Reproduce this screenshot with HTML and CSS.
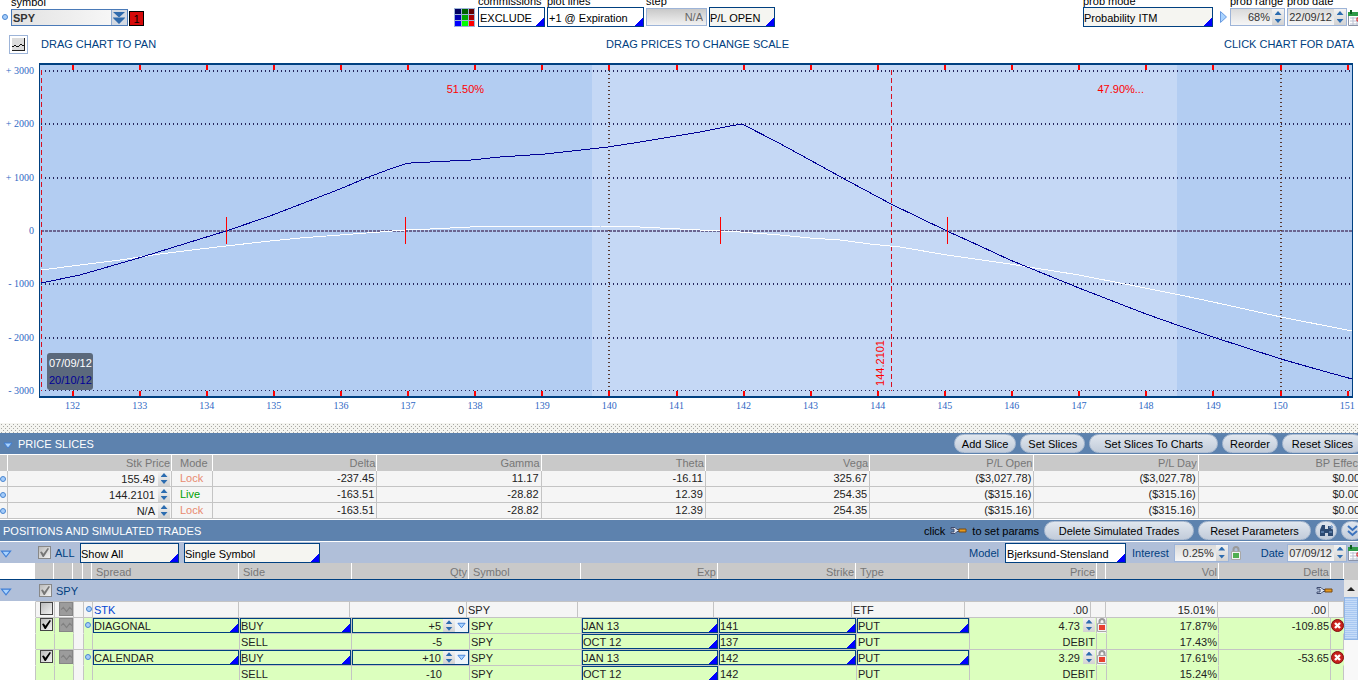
FILE: index.html
```html
<!DOCTYPE html>
<html lang="en">
<head>
    <meta charset="UTF-8">
    <title>Risk Profile - SPY</title>
    <link rel="stylesheet" href="styles.css">
</head>
<body>
    <!-- shared icons -->
    <svg class="defs" aria-hidden="true">
        <symbol id="i-tri" viewBox="0 0 10 7"><path d="M1 1h8L5 6z" fill="#a9d3ff" stroke="#3f7fd6"/></symbol>
        <symbol id="i-cal" viewBox="0 0 16 16">
            <path d="M0.5 2.5h15v13h-15z" fill="#fff" stroke="#8a93a8"/>
            <path d="M0 2h16v4H0z" fill="#2f9a48"/>
            <path d="M3 0v4M12 0v4" stroke="#0c5c20" stroke-width="2"/>
            <path d="M2 8h12M2 11h12M2 14h12M5 7v8M9 7v8M13 7v8" stroke="#b9bfd0"/>
            <path d="M9 8h3v3H9z" fill="none" stroke="#e02020"/>
        </symbol>
        <symbol id="i-lock" viewBox="0 0 10 14">
            <path d="M2.5 6V3.500a2.500 2.500 0 0 1 5 0V6" fill="none" stroke="#9a9a9a" stroke-width="2"/>
            <path d="M0.500 5.500h9v8h-9z" fill="#f2f2f2" stroke="#a8a8a8"/>
            <path d="M2 7h6v5H2z" fill="currentColor"/>
        </symbol>
        <symbol id="i-wrench" viewBox="0 0 17 9">
            <path d="M1 1.500h4l2 2h2v2H7l-2 2H1V6h3V3H1z" fill="#dfe6f2" stroke="#3f4c70"/>
            <path d="M9 3h7v3H9z" fill="#e89a1c" stroke="#7a4a10"/>
        </symbol>
        <symbol id="i-del" viewBox="0 0 13 13">
            <circle cx="6.500" cy="6.500" r="6" fill="#c8201c" stroke="#7c0d0d"/>
            <path d="M4 4l5 5M9 4l-5 5" stroke="#fff" stroke-width="2.400"/>
        </symbol>
        <symbol id="i-mini" viewBox="0 0 13 13">
            <path d="M0.500 0.500h12v12h-12z" fill="#9c9c9c" stroke="#868686"/>
            <path d="M2 7l2-2 3 4 3-4 2 2" fill="none" stroke="#818181"/>
        </symbol>
    </svg>

    <div class="toolbar">
        <div class="group symbol-group">
            <i class="dot"></i>
            <div class="field f-symbol">
                <label for="symbol">symbol</label>
                <div class="combo">
                    <input id="symbol" type="text" value="SPY">
                    <button type="button" aria-label="Recent symbols">
                        <svg width="14" height="14" viewBox="0 0 14 14"><path d="M1 1h12L7 6.500zM1 7h12l-6 6z" fill="#2f6aac"/><path d="M1 6.500h12" stroke="#7f9fc4"/></svg>
                    </button>
                </div>
            </div>
            <button type="button" class="link-no">1</button>
        </div>
        <div class="group">
            <button type="button" class="palette" aria-label="Colors">
                <svg width="21" height="19" viewBox="0 0 21 19" shape-rendering="crispEdges">
                    <path d="M0 0h21v19H0z" fill="#9db4d8"/>
                    <path d="M1 1h6v5H1z" fill="#000060"/><path d="M8 1h6v5H8z" fill="#006000"/><path d="M15 1h5v5h-5z" fill="#600000"/>
                    <path d="M1 7h6v5H1z" fill="#0000b0"/><path d="M8 7h6v5H8z" fill="#00a800"/><path d="M15 7h5v5h-5z" fill="#a80000"/>
                    <path d="M1 13h6v5H1z" fill="#0000ff"/><path d="M8 13h6v5H8z" fill="#00ff00"/><path d="M15 13h5v5h-5z" fill="#ff0000"/>
                </svg>
            </button>
            <div class="field f-comm">
                <label for="comm">commissions</label>
                <select id="comm" class="drop"><option>EXCLUDE</option></select>
            </div>
            <div class="field f-lines">
                <label for="lines">plot lines</label>
                <select id="lines" class="drop"><option>+1 @ Expiration</option></select>
            </div>
            <div class="field f-step">
                <label for="step">step</label>
                <input id="step" type="text" class="num-box" value="N/A">
            </div>
            <div class="field f-pl">
                <select class="drop pale" aria-label="Plot value"><option>P/L OPEN</option></select>
            </div>
        </div>
        <div class="group right">
            <div class="field f-mode">
                <label for="mode">prob mode</label>
                <select id="mode" class="drop pale"><option>Probability ITM</option></select>
            </div>
            <button type="button" class="play" aria-label="Expand"><svg width="7" height="12" viewBox="0 0 7 12"><path d="M0.500 0.500L6.500 6l-6 5.500z" fill="#a9d3ff" stroke="#6a9be0"/></svg></button>
            <div class="field f-range">
                <label for="range">prob range</label>
                <div class="spin-box"><input id="range" type="text" value="68%"><span class="spin"><button type="button" aria-label="Up"></button><button type="button" aria-label="Down"></button></span></div>
            </div>
            <div class="field f-date">
                <label for="pdate">prob date</label>
                <div class="spin-box"><input id="pdate" type="text" value="22/09/12"><span class="spin"><button type="button" aria-label="Up"></button><button type="button" aria-label="Down"></button></span></div>
            </div>
            <button type="button" class="cal" aria-label="Pick date"><svg width="16" height="16"><use href="#i-cal"/></svg></button>
        </div>
    </div>

    <div class="hints">
        <button type="button" class="chart-btn" aria-label="Chart">
            <svg width="13" height="13" viewBox="0 0 13 13" shape-rendering="crispEdges"><path d="M0 0h13v13H0z" fill="#222"/><path d="M0 0h12v12H0z" fill="#dcdcdc"/><path d="M0 8.500h2M2 7.500h2M4 8.500h3M7 7.500h1M8 6.500h2M10 7.500h2" fill="none" stroke="#111"/></svg>
        </button>
        <span class="hint">DRAG CHART TO PAN</span>
        <span class="hint">DRAG PRICES TO CHANGE SCALE</span>
        <span class="hint">CLICK CHART FOR DATA</span>
    </div>

    <div class="chart">
        <div class="y-axis"><span>+ 3000</span><span>+ 2000</span><span>+ 1000</span><span>0</span><span>- 1000</span><span>- 2000</span><span>- 3000</span></div>
        <div class="plot">
            <svg viewBox="40 65 1312 331" preserveAspectRatio="none" shape-rendering="crispEdges">
                <path d="M592 65h585v331H592z" fill="#c5d8f5"/>
                <!-- grid -->
                <path class="grid" d="M41 71H1352M41 124H1352M41 178H1352M41 284H1352M41 338H1352"/>
                <path class="grid thin" d="M41 390.500H1352"/>
                <path class="zero" d="M41 231H1352"/>
                <path class="expiry" d="M609 70V391M1281 70V391"/>
                <!-- price ticks -->
                <path class="tick" d="M73 65v5M140 65v5M207 65v5M274 65v5M341 65v5M408 65v5M475 65v5M542 65v5M609 65v5M677 65v5M744 65v5M811 65v5M878 65v5M945 65v5M1012 65v5M1079 65v5M1146 65v5M1213 65v5M1281 65v5M1348 65v5"/>
                <path class="tick" d="M73 391v5M140 391v5M207 391v5M274 391v5M341 391v5M408 391v5M475 391v5M542 391v5M609 391v5M677 391v5M744 391v5M811 391v5M878 391v5M945 391v5M1012 391v5M1079 391v5M1146 391v5M1213 391v5M1281 391v5M1348 391v5"/>
                <path class="slice" d="M41.500 70V391M891.500 70V391"/>
                <!-- today and expiration curves -->
                <polyline class="today" points="41,270 80,265 120,260 160,254 200,249 226,246 270,241 300,238 340,235 380,232 405,230 430,229 470,227 510,226 600,226 640,227 700,230 740,232 780,235 810,238 840,240 870,244 900,247 947,255 1010,264 1079,275 1130,285 1180,295 1213,302 1281,317 1352,331"/>
                <polyline class="exp" points="41,283 80,275 142,257 200,239 226,231 270,216 340,189 366,178 390,169 405,164 411,163 430,162 471,160 500,157 545,154 608,147 640,142 670,137 700,132 730,126 742,124 777,142 810,160 850,182 891,204 920,218 947,231 980,246 1010,260 1079,288 1146,314 1180,326 1213,337 1247,348 1281,359 1316,369 1352,379"/>
                <path class="even" d="M226.500 217v27M405.500 217v27M720.500 217v27M947.500 217v27"/>
            </svg>
            <span class="pct pct-left">51.50%</span>
            <span class="pct pct-right">47.90%...</span>
            <span class="price-now">144.2101</span>
            <div class="dates"><span>07/09/12</span><span class="exp-date">20/10/12</span></div>
        </div>
    </div>
    <div class="x-axis"><span>132</span><span>133</span><span>134</span><span>135</span><span>136</span><span>137</span><span>138</span><span>139</span><span>140</span><span>141</span><span>142</span><span>143</span><span>144</span><span>145</span><span>146</span><span>147</span><span>148</span><span>149</span><span>150</span><span>151</span></div>

    <svg class="splitter" aria-hidden="true" shape-rendering="crispEdges">
        <pattern id="grip" width="4" height="4" patternUnits="userSpaceOnUse"><path d="M1 1h1v1H1zM3 3h1v1H3z" fill="#a8a8a4"/></pattern>
        <rect width="100%" height="10" fill="url(#grip)"/>
    </svg>

    <div class="title-bar">
        <svg class="fold" width="10" height="7"><use href="#i-tri"/></svg>
        <h2>PRICE SLICES</h2>
        <div class="actions">
            <button type="button" class="pill">Add Slice</button>
            <button type="button" class="pill">Set Slices</button>
            <button type="button" class="pill wide">Set Slices To Charts</button>
            <button type="button" class="pill">Reorder</button>
            <button type="button" class="pill last">Reset Slices</button>
        </div>
    </div>
    <table class="slices">
        <colgroup><col class="c-dot"><col class="c-price"><col class="c-mode"><col><col><col><col><col><col><col></colgroup>
        <thead>
            <tr><th></th><th>Stk Price</th><th class="mode">Mode</th><th>Delta</th><th>Gamma</th><th>Theta</th><th>Vega</th><th>P/L Open</th><th>P/L Day</th><th>BP Effect</th></tr>
        </thead>
        <tbody>
            <tr><td><i class="dot"></i></td><td><div class="cell-spin"><span>155.49</span><span class="spin"><button type="button" aria-label="Up"></button><button type="button" aria-label="Down"></button></span></div></td><td class="mode lock">Lock</td><td>-237.45</td><td>11.17</td><td>-16.11</td><td>325.67</td><td>($3,027.78)</td><td>($3,027.78)</td><td>$0.00</td></tr>
            <tr><td><i class="dot"></i></td><td><div class="cell-spin"><span>144.2101</span><span class="spin"><button type="button" aria-label="Up"></button><button type="button" aria-label="Down"></button></span></div></td><td class="mode live">Live</td><td>-163.51</td><td>-28.82</td><td>12.39</td><td>254.35</td><td>($315.16)</td><td>($315.16)</td><td>$0.00</td></tr>
            <tr><td><i class="dot"></i></td><td><div class="cell-spin"><span>N/A</span><span class="spin"><button type="button" aria-label="Up"></button><button type="button" aria-label="Down"></button></span></div></td><td class="mode lock">Lock</td><td>-163.51</td><td>-28.82</td><td>12.39</td><td>254.35</td><td>($315.16)</td><td>($315.16)</td><td>$0.00</td></tr>
        </tbody>
    </table>

    <div class="title-bar positions-bar">
        <h2>POSITIONS AND SIMULATED TRADES</h2>
        <div class="actions">
            <span class="note">click <svg width="17" height="9"><use href="#i-wrench"/></svg> to set params</span>
            <button type="button" class="pill delete">Delete Simulated Trades</button>
            <button type="button" class="pill reset">Reset Parameters</button>
            <button type="button" class="pill round" aria-label="Find">
                <svg width="15" height="13" viewBox="0 0 15 13"><path d="M1 12V6l2-5h3v4h3V2h3l2 4v6H9V9H6v3z" fill="#2d4a72"/><path d="M2 8h3M10 8h3M10 3h4l-2-2M14 3l-2 2" fill="none" stroke="#7fa3d2"/></svg>
            </button>
            <button type="button" class="pill round" aria-label="More">
                <svg width="11" height="12" viewBox="0 0 11 12"><path d="M1 1l4.500 4L10 1M1 6l4.500 4L10 6" fill="none" stroke="#3c73bd" stroke-width="2"/></svg>
            </button>
        </div>
    </div>
    <div class="filters">
        <svg class="fold" width="12" height="8"><use href="#i-tri"/></svg>
        <label class="check-label"><input type="checkbox" class="check soft" checked>ALL</label>
        <select class="drop pale f-show" aria-label="Show"><option>Show All</option></select>
        <select class="drop pale f-single" aria-label="Grouping"><option>Single Symbol</option></select>
        <div class="params">
            <label for="model">Model</label>
            <select id="model" class="drop f-model"><option>Bjerksund-Stensland</option></select>
            <label for="interest">Interest</label>
            <div class="spin-box f-interest"><input id="interest" type="text" value="0.25%"><span class="spin"><button type="button" aria-label="Up"></button><button type="button" aria-label="Down"></button></span></div>
            <svg class="lock-green" width="10" height="14"><use href="#i-lock"/></svg>
            <label for="date">Date</label>
            <div class="spin-box f-day"><input id="date" type="text" value="07/09/12"><span class="spin"><button type="button" aria-label="Up"></button><button type="button" aria-label="Down"></button></span></div>
            <button type="button" class="cal" aria-label="Pick date"><svg width="16" height="16"><use href="#i-cal"/></svg></button>
        </div>
    </div>

    <div class="positions">
        <table class="pos">
            <thead>
                <tr><th class="blank"></th><th></th><th></th><th></th><th></th><th class="l">Spread</th><th class="l">Side</th><th>Qty</th><th class="l">Symbol</th><th>Exp</th><th>Strike</th><th class="l">Type</th><th>Price</th><th></th><th>Vol</th><th>Delta</th><th></th></tr>
            </thead>
            <tbody>
                <tr class="sym"><td colspan="17">
                    <div class="sym-row">
                        <svg class="fold" width="12" height="8"><use href="#i-tri"/></svg>
                        <label class="check-label"><input type="checkbox" class="check soft" checked>SPY</label>
                        <svg class="wrench" width="17" height="9"><use href="#i-wrench"/></svg>
                    </div>
                </td></tr>
                <tr class="stk"><td class="blank"></td><td><input type="checkbox" class="check" aria-label="Include STK"></td><td><svg width="14" height="14"><use href="#i-mini"/></svg></td><td></td><td><i class="dot"></i></td><td class="l"><a href="#">STK</a></td><td></td><td>0</td><td class="l">SPY</td><td></td><td></td><td class="l">ETF</td><td>.00</td><td></td><td>15.01%</td><td>.00</td><td></td></tr>
                <tr class="leg"><td class="blank"></td><td><input type="checkbox" class="check" aria-label="Include DIAGONAL" checked></td><td><svg width="14" height="14"><use href="#i-mini"/></svg></td><td class="gap"></td><td><i class="dot"></i></td><td><select class="drop" aria-label="Spread"><option>DIAGONAL</option></select></td><td><select class="drop" aria-label="Side"><option>BUY</option></select></td><td><div class="qty"><input type="text" value="+5" aria-label="Quantity"><span class="spin"><button type="button" aria-label="Up"></button><button type="button" aria-label="Down"></button></span><button type="button" class="more" aria-label="Quantities"><svg width="9" height="7"><use href="#i-tri"/></svg></button></div></td><td class="l">SPY</td><td><select class="drop" aria-label="Expiration"><option>JAN 13</option></select></td><td><select class="drop" aria-label="Strike"><option>141</option></select></td><td><select class="drop" aria-label="Type"><option>PUT</option></select></td><td><div class="cell-spin"><span>4.73</span><span class="spin"><button type="button" aria-label="Up"></button><button type="button" aria-label="Down"></button></span></div></td><td class="lock-cell"><svg width="10" height="14"><use href="#i-lock"/></svg></td><td>17.87%</td><td>-109.85</td><td class="del"><button type="button" aria-label="Remove"><svg width="13" height="13"><use href="#i-del"/></svg></button></td></tr>
                <tr class="leg sell"><td class="blank"></td><td></td><td></td><td class="gap"></td><td></td><td></td><td class="l">SELL</td><td class="qty-text">-5</td><td class="l">SPY</td><td><select class="drop" aria-label="Expiration"><option>OCT 12</option></select></td><td><select class="drop" aria-label="Strike"><option>137</option></select></td><td class="l">PUT</td><td>DEBIT</td><td></td><td>17.43%</td><td></td><td></td></tr>
                <tr class="leg"><td class="blank"></td><td><input type="checkbox" class="check" aria-label="Include CALENDAR" checked></td><td><svg width="14" height="14"><use href="#i-mini"/></svg></td><td class="gap"></td><td><i class="dot"></i></td><td><select class="drop" aria-label="Spread"><option>CALENDAR</option></select></td><td><select class="drop" aria-label="Side"><option>BUY</option></select></td><td><div class="qty"><input type="text" value="+10" aria-label="Quantity"><span class="spin"><button type="button" aria-label="Up"></button><button type="button" aria-label="Down"></button></span><button type="button" class="more" aria-label="Quantities"><svg width="9" height="7"><use href="#i-tri"/></svg></button></div></td><td class="l">SPY</td><td><select class="drop" aria-label="Expiration"><option>JAN 13</option></select></td><td><select class="drop" aria-label="Strike"><option>142</option></select></td><td><select class="drop" aria-label="Type"><option>PUT</option></select></td><td><div class="cell-spin"><span>3.29</span><span class="spin"><button type="button" aria-label="Up"></button><button type="button" aria-label="Down"></button></span></div></td><td class="lock-cell"><svg width="10" height="14"><use href="#i-lock"/></svg></td><td>17.61%</td><td>-53.65</td><td class="del"><button type="button" aria-label="Remove"><svg width="13" height="13"><use href="#i-del"/></svg></button></td></tr>
                <tr class="leg sell"><td class="blank"></td><td></td><td></td><td class="gap"></td><td></td><td></td><td class="l">SELL</td><td class="qty-text">-10</td><td class="l">SPY</td><td><select class="drop" aria-label="Expiration"><option>OCT 12</option></select></td><td class="l">142</td><td class="l">PUT</td><td>DEBIT</td><td></td><td>15.24%</td><td></td><td></td></tr>
            </tbody>
        </table>
        <div class="scroll">
            <button type="button" aria-label="Scroll up"><svg width="8" height="4" viewBox="0 0 8 4"><path d="M0 4l4-4 4 4z" fill="#222"/></svg></button>
            <div class="thumb"></div>
        </div>
    </div>
</body>
</html>
```

FILE: styles.css
```css
*{box-sizing: border-box;}
html,body{height: 100%;}
body{margin: 0;overflow: hidden;background-color: #fff;color: #222;font: 11px/14px "Liberation Sans", Arial, sans-serif;}
button,input,select{margin: 0;padding: 0;border: 0;border-radius: 0;background: none;color: inherit;font: inherit;}
svg{display: block;flex: none;}
.defs{width: 0;height: 0;position: absolute;}
h2{margin: 0;font-size: 11px;font-weight: normal;color: #fff;}

/* small parts */
.dot{display: block;flex: none;width: 6px;height: 6px;border: 1px solid #4a86d0;border-radius: 50%;background-color: #a6cdfb;}
.drop{display: block;width: 100%;height: 20px;padding: 2px 1px 0;border: 1px solid #004080;appearance: none;color: #000;background: linear-gradient(135deg, transparent 50%, #00f 50%) right bottom/8px 8px no-repeat #fff;}
.pale{padding-left: 0;background-color: #f5f5f1;}
.num-box{width: 100%;height: 18px;padding-right: 3px;border: 1px solid #9db4d8;text-align: right;color: #666;background: linear-gradient(#c9c9c9, #f2f2f2);}
.spin{display: flex;flex-direction: column;flex: none;width: 12px;height: 14px;background: linear-gradient(#f2f2f2, #d2d2d2);}
.spin button{flex: 1;display: flex;align-items: center;justify-content: center;}
.spin button:before{content: "";width: 7px;height: 4px;background-color: #2c6cb0;clip-path: polygon(50% 0, 100% 100%, 0 100%);}
.spin button:last-child:before{clip-path: polygon(0 0, 100% 0, 50% 100%);}
.spin-box{display: flex;align-items: center;width: 100%;height: 18px;border: 1px solid #9db4d8;background: linear-gradient(#dadada, #f6f6f6);}
.spin-box input{flex: 1;min-width: 0;padding-right: 2px;text-align: right;color: #333;}
.spin-box .spin{height: 16px;}
.cal{width: 10px;overflow: hidden;margin-left: 1px;}
.check{flex: none;appearance: none;display: block;width: 13px;height: 13px;border: 1px solid #444;background: linear-gradient(135deg, #bbb, #f2f2f2);}
.check:checked:after{content: "";display: block;width: 9px;height: 9px;margin: 1px;background-color: #000;clip-path: polygon(0 45%, 20% 40%, 38% 65%, 85% 0, 100% 8%, 42% 100%, 30% 100%);}
.soft{border-color: #888;}
.soft:checked:after{background-color: #777;}

/* toolbar */
.toolbar{display: flex;height: 30px;padding-left: 2px;}
.group{display: flex;align-items: flex-end;gap: 2px;padding-bottom: 3px;}
.symbol-group{width: 452px;padding-bottom: 4px;}
.symbol-group .dot{margin: 0 1px 6px 0;}
.symbol-group .link-no{margin-left: -1px;}
.right{margin-left: auto;}
.field{flex: none;}
.field label{display: block;height: 13px;color: #000;white-space: nowrap;}
.f-symbol label{height: 14px;}
.f-symbol{width: 117px;}
.f-comm{width: 67px;}
.f-lines{width: 97px;}
.f-step{width: 61px;padding-bottom: 1px;}
.f-pl{width: 66px;}
.f-mode{width: 130px;}
.f-range{width: 55px;padding-bottom: 1px;}
.f-date{width: 60px;padding-bottom: 1px;}
.f-step label,.f-range label,.f-date label{height: 14px;}
.combo{display: flex;height: 17px;border: 1px solid #4a7ab8;background: linear-gradient(90deg, #e2e2e2, #fafafa);}
.combo input{flex: 1;min-width: 0;padding-left: 1px;font-weight: bold;color: #333;}
.combo button{width: 16px;border-left: 1px solid #8fabd0;background-color: #d3d9e2;}
.link-no{width: 15px;height: 15px;border: 1px solid #000;background-color: #d60a0a;color: #000;}
.palette{margin-right: 1px;}
.play{margin: 0 1px 4px 5px;}
.group .cal{margin: 0 0 1px -1px;}

/* chart */
.hints{display: grid;grid-template-columns: 32px 1fr auto 1fr;align-items: center;height: 33px;padding: 0 4px 5px 9px;color: #004080;}
.hints .hint:last-child{text-align: right;}
.chart-btn{display: flex;align-items: center;justify-content: center;width: 19px;height: 19px;border: 1px solid #9db4d8;}
.chart{display: grid;grid-template-columns: 39px 1fr;padding-right: 5px;}
.y-axis{display: flex;flex-direction: column;justify-content: space-between;padding: 1px 5px 0 0;text-align: right;}
.y-axis,.x-axis{font: 10px/14px "Liberation Serif", "Times New Roman", serif;color: #2f68c4;}
.plot{position: relative;border: 1px solid #004080;border-width: 2px 1px;background-color: #b3cdf2;}
.plot svg{width: 100%;height: 331px;}
.plot path,.plot polyline{vector-effect: non-scaling-stroke;}
.grid{stroke: #26265c;stroke-width: 2;stroke-dasharray: 1 3;}
.thin{stroke-width: 1;}
.zero{stroke: #6b6590;stroke-width: 2;stroke-dasharray: 3 1;}
.expiry{stroke: #5a3a30;stroke-width: 2;stroke-dasharray: 1 3;}
.tick{stroke: #f00;stroke-width: 2;}
.slice{stroke: #d81020;stroke-dasharray: 5 3;}
.even{stroke: #f00;}
.today,.exp{fill: none;stroke: #fff;}
.exp{stroke: #000096;}
.pct,.price-now{position: absolute;color: #f00;}
.pct{top: 17px;}
.pct-left{left: 31%;}
.pct-right{left: 80.6%;}
.price-now{left: 63.5%;bottom: 10px;writing-mode: vertical-rl;transform: rotate(180deg);}
.dates{position: absolute;left: 7px;bottom: 6px;padding: 2px 1px 1px 2px;border-radius: 3px;background-color: #5b697c;color: #fff;line-height: 17px;}
.dates span{display: block;}
.dates .exp-date{color: #000096;}
.x-axis{display: flex;height: 25px;margin: 0 -23px 0 39px;padding-top: 1px;text-align: center;}
.x-axis span{flex: 1;}
.splitter{width: 100%;height: 10px;background-color: #f5f5f1;}

/* section bars */
.title-bar{display: flex;align-items: center;height: 22px;padding-left: 3px;border-bottom: 1px solid #fff;background-color: #5d82ae;}
.title-bar .fold{margin: 4px 5px 0 0;}
.actions{display: flex;align-items: center;gap: 4px;margin: 0 -5px 0 auto;}
.pill{height: 19px;padding: 0 7px;border: 1px solid #aebdd2;border-radius: 10px;color: #000;white-space: nowrap;background: linear-gradient(#e0e6ee, #c2ccda);}
.wide{padding: 0 14px;}
.last{padding: 0 9px;}
.delete{width: 150px;}
.reset{width: 113px;}
.round{display: flex;align-items: center;justify-content: center;width: 22px;padding: 0;}
.note{display: flex;align-items: center;gap: 5px;margin-right: 1px;color: #000;}

/* price slices */
table{border-collapse: separate;border-spacing: 0;}
th{font-weight: normal;color: #777;background-color: #c9c9c9;}
.slices{table-layout: fixed;width: calc(100% + 5px);border-bottom: 1px solid #fff;}
.slices th,.slices td{height: 16px;padding: 0 2px;border-right: 1px solid #fff;text-align: right;line-height: 15px;overflow: hidden;}
.slices th{padding: 1px 1px 0;}
.slices td{border-right-color: #c4c4c4;border-bottom: 1px solid #c4c4c4;background-color: #f5f5f5;}
.slices .c-dot{width: 8px;}
.slices .c-price{width: 164px;}
.slices .c-mode{width: 41px;}
.slices td:first-child{padding: 0;}
.slices td:nth-child(2){padding-right: 1px;}
.slices .mode{padding-left: 8px;text-align: left;}
.lock{color: #e88a70;}
.live{color: #00a000;}
.cell-spin{display: flex;justify-content: flex-end;gap: 3px;height: 14px;}

/* positions */
.filters{display: flex;align-items: center;height: 21px;background-color: #b0bfd9;color: #004080;}
.filters .fold,.sym-row .fold{margin: 3px 26px 0 0;}
.check-label{display: flex;align-items: center;gap: 4px;width: 42px;}
.filters .f-show{width: 99px;margin-right: 5px;}
.filters .f-single{width: 136px;}
.params{display: flex;align-items: center;margin-left: auto;}
.params .f-model{width: 121px;margin: 0 6px;}
.f-interest{width: 55px;margin: 0 2px 0 5px;}
.f-day{width: 60px;margin-left: 3px;}
.lock-green{margin-right: 20px;color: #4fae50;}
.positions{display: flex;}
.pos{display: block;flex: 1;min-width: 0;}
.pos thead,.pos tbody{display: block;}
/* the fr numbers are shares of the free width */
.pos tr{display: grid;grid-template-columns: 36px 19px 19px 10px 9px 147fr 112fr 118fr 112fr 137fr 138fr 113fr 127fr 10px 112fr 112fr 13px;height: 16px;}
.pos .stk{grid-template-columns: 36px 19px 19px 10px 9px 146fr 111fr 117fr 111fr 136fr 138fr 113fr 126fr 15px 112fr 111fr 15px;}
.pos thead tr{grid-template-columns: 35px 19px 19px 10px 9px 147fr 113fr 117fr 112fr 137fr 138fr 113fr 128fr 9px 113fr 112fr 13px;height: 17px;border-bottom: 1px solid #004080;}
.pos th,.pos td{min-width: 0;padding: 0 2px;overflow: hidden;text-align: right;white-space: nowrap;}
.pos th{padding: 2px 1px 0;border-right: 1px solid #fff;}
.pos thead .l{padding-left: 4px;}
.pos .l{text-align: left;}
.pos tbody .l{padding-left: 1px;}
.pos .sym{display: block;height: 21px;}
.pos .sym td{display: block;padding: 0;}
.sym-row{display: flex;align-items: center;height: 21px;background-color: #b0bfd9;color: #004080;}
.sym-row .fold{margin-right: 27px;}
.sym-row .wrench{margin: 0 11px 0 auto;}
.pos td{border: 0 solid #c4c4c4;border-width: 1px 1px 0 0;background-color: #f5f5f5;line-height: 16px;}
.pos .sym td{border: 0;}
.pos .leg td{padding: 0 1px;background-color: #dcffbe;}
.pos .leg .gap{background-color: #f5f5f5;}
.pos td.blank,.pos th.blank,.pos .leg td.blank{border-top-color: #fff;background-color: #fff;}
.pos td:nth-child(2),.pos .leg td:nth-child(2){padding: 0 0 0 4px;}
.pos td:nth-child(3),.pos .leg td:nth-child(3){padding: 0 0 0 4px;}
.pos .dot{margin-top: 4px;}
.pos .sell td:nth-child(-n+6),.pos .sell td:nth-child(n+13){border-top-color: #dcffbe;}
.pos .sell td.gap{border-top-color: #f5f5f5;}
.pos .sell td.blank{border-top-color: #fff;}
.pos .leg td:has(.drop),.pos .leg td:has(.qty){padding: 0;}
.pos .drop{height: 15px;padding: 1px 0 0;line-height: 12px;color: #222;background-color: #dcffbe;}
.pos a{color: #0046d2;text-decoration: none;}
.qty{display: flex;height: 15px;border: 1px solid #004080;}
.qty input{flex: 1;min-width: 0;padding-right: 2px;text-align: right;}
.qty .spin{height: 13px;}
.qty .more{display: flex;align-items: center;justify-content: center;width: 13px;background-color: #eef4fa;}
.pos .leg .qty-text{padding-right: 27px;}
.pos .leg .lock-cell{padding: 0;color: #e84030;background-color: #f5f5f5;}
.pos .leg .del{padding: 1px 0 0;border-right: 0;}
.scroll{display: flex;flex-direction: column;width: 14px;height: 117px;border-top: 17px solid #c9c9c9;background-color: #f8f8f8;}
.scroll button{display: flex;align-items: center;justify-content: center;height: 17px;background-color: #e6e6e6;}
.thumb{height: 43px;border: 1px solid #8fb4e4;background: repeating-linear-gradient(#a9c8f2 0, #a9c8f2 1px, #c6dcf8 1px, #c6dcf8 2px);}
```
